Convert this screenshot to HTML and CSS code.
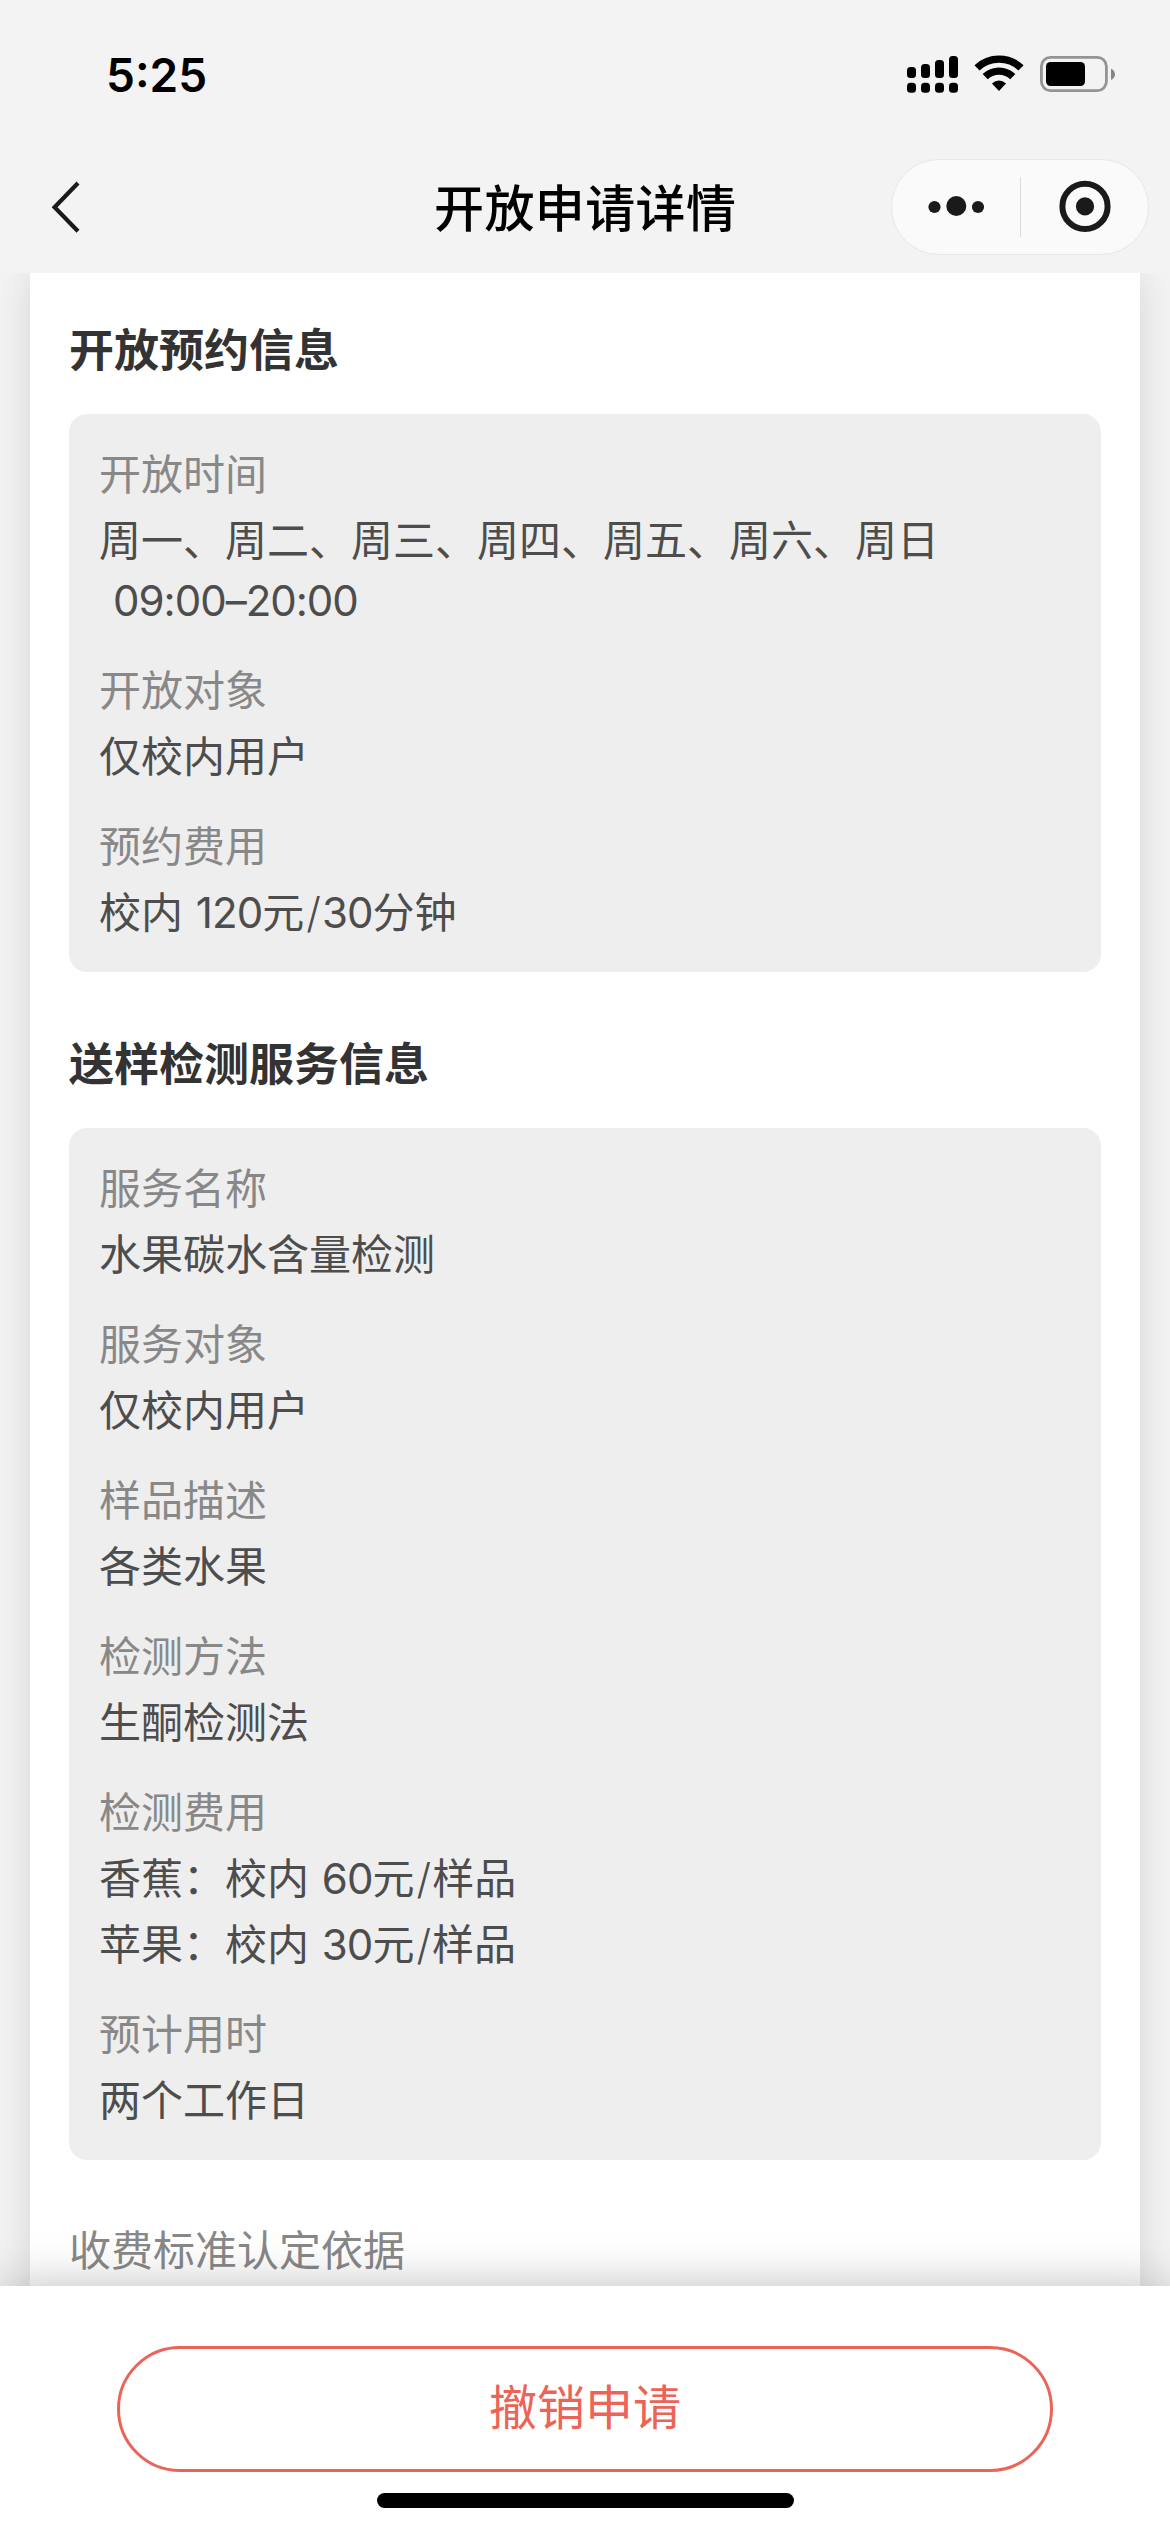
FILE: index.html
```html
<!DOCTYPE html>
<html lang="zh-CN">
<head>
<meta charset="utf-8">
<title>开放申请详情</title>
<link rel="stylesheet" href="styles.css">
</head>
<body>
<div class="page">
  <header class="header">
    <div class="status">
      <span class="clock">5:25</span>
      <div class="status-icons">
        <svg width="51" height="38" viewBox="0 0 51 38">
          <rect x="0" y="12" width="9" height="11" rx="3.5"/><rect x="14" y="9" width="9" height="14" rx="3.5"/>
          <rect x="28" y="5" width="9" height="18" rx="3.5"/><rect x="42" y="1" width="9" height="22" rx="3.5"/>
          <rect x="0" y="27.8" width="9" height="10" rx="3.5"/><rect x="14" y="27.8" width="9" height="10" rx="3.5"/>
          <rect x="28" y="27.8" width="9" height="10" rx="3.5"/><rect x="42" y="27.8" width="9" height="10" rx="3.5"/>
        </svg>
        <svg class="wifi" width="50" height="38" viewBox="0 0 50 38">
          <g fill="none" stroke="#000" stroke-width="7.4"><path d="M3 12.9a32 32 0 0 1 44 0"/><path d="M11.2 21.6a20 20 0 0 1 27.6 0"/></g>
          <path d="M25 36 17.9 28.6Q25 22.4 32.1 28.6Z"/>
        </svg>
        <svg width="76" height="38" viewBox="0 0 76 38">
          <rect x="1.4" y="2.4" width="65" height="33.2" rx="9" fill="none" stroke="#949494" stroke-width="2.8"/>
          <rect x="6" y="7" width="39" height="24" rx="4.5"/>
          <path d="M71 13.7c5.3 2 5.3 9.3 0 11.3Z" fill="#868686"/>
        </svg>
      </div>
    </div>
    <nav class="nav">
      <svg class="back" width="30" height="54" viewBox="0 0 30 54"><path d="M27 3 3.6 27.2 27 51.2" fill="none" stroke="#1a1a1a" stroke-width="4.2"/></svg>
      <h1 class="nav-title">开放申请详情</h1>
      <div class="capsule">
        <svg width="128" height="94" viewBox="0 0 128 94" fill="#1a1a1a"><circle cx="42.5" cy="47" r="6.1"/><circle cx="64.3" cy="46" r="10"/><circle cx="86" cy="47" r="6.1"/></svg>
        <span class="divider"></span>
        <svg width="127" height="94" viewBox="0 0 127 94"><circle cx="64" cy="46.4" r="22.6" fill="none" stroke="#1a1a1a" stroke-width="6"/><circle cx="64" cy="46.4" r="9.1" fill="#1a1a1a"/></svg>
      </div>
    </nav>
  </header>

  <main class="content">
    <div class="card">
      <h2 class="section-title">开放预约信息</h2>
      <section class="panel">
        <div class="field">
          <div class="label">开放时间</div>
          <div>周一、周二、周三、周四、周五、周六、周日</div>
          <div class="time">09:00–20:00</div>
        </div>
        <div class="field"><div class="label">开放对象</div><div>仅校内用户</div></div>
        <div class="field"><div class="label">预约费用</div><div>校内 <span class="num">120</span>元<span class="slash">/</span><span class="num">30</span>分钟</div></div>
      </section>

      <h2 class="section-title">送样检测服务信息</h2>
      <section class="panel">
        <div class="field"><div class="label">服务名称</div><div>水果碳水含量检测</div></div>
        <div class="field"><div class="label">服务对象</div><div>仅校内用户</div></div>
        <div class="field"><div class="label">样品描述</div><div>各类水果</div></div>
        <div class="field"><div class="label">检测方法</div><div>生酮检测法</div></div>
        <div class="field">
          <div class="label">检测费用</div>
          <div>香蕉：校内 <span class="num">60</span>元<span class="slash">/</span>样品</div>
          <div>苹果：校内 <span class="num">30</span>元<span class="slash">/</span>样品</div>
        </div>
        <div class="field"><div class="label">预计用时</div><div>两个工作日</div></div>
      </section>
      <div class="label basis">收费标准认定依据</div>
    </div>
  </main>

  <footer class="footer">
    <button class="cancel" type="button">撤销申请</button>
    <div class="home-bar"></div>
  </footer>
</div>
</body>
</html>
```
FILE: styles.css
```css
* { box-sizing: border-box; }
body {
  margin: 0;
  background: #f3f3f3;
  font-family: Inter, "Noto Sans CJK SC", sans-serif;
  font-size: 42px;
  line-height: 66px;
  color: #4d4d4d;
}
.page {
  width: 1170px;
  height: 2532px;
  display: flex;
  flex-direction: column;
  overflow: hidden;
}
svg { display: block; flex: none; }

/* Status bar and navigation */
.header { height: 273px; flex: none; }
.status {
  height: 150px;
  padding: 0 54px 0 106px;
  display: flex;
  justify-content: space-between;
}
.clock {
  color: #000;
  font-size: 46px;
  font-weight: 600;
  line-height: 150px;
}
.status-icons { display: flex; padding-top: 55px; }
.wifi { margin: 0 16px; }
.nav {
  height: 123px;
  padding: 9px 21px 0 51px;
  display: grid;
  grid-template-columns: 258px 1fr 258px;
  align-items: start;
}
.back { margin-top: 21px; }
.nav-title {
  margin: 0;
  padding: 2px 0 0 125px;
  color: #000;
  font-size: 50px;
  font-weight: 500;
  line-height: 96px;
  letter-spacing: 0.4px;
  white-space: nowrap;
}
.capsule {
  width: 258px;
  height: 96px;
  border: 1px solid #e7e7e7;
  border-radius: 48px;
  background: #fafafa;
  display: flex;
  align-items: center;
}
.divider { width: 1px; height: 60px; background: #dcdcdc; }

/* Scrolled content */
.content { flex: 1; min-height: 0; overflow: hidden; padding: 0 30px; }
.card {
  height: 100%;
  padding: 45px 39px 0;
  background: #fff;
  box-shadow: 0 0 36px rgba(0, 0, 0, .12);
}
.section-title {
  margin: 0 0 30px;
  color: #333;
  font-size: 45px;
  font-weight: 600;
  line-height: 66px;
}
.panel {
  margin-bottom: 60px;
  padding: 28px 30px 26px;
  border-radius: 18px;
  background: #eee;
  display: flex;
  flex-direction: column;
  gap: 24px;
  word-spacing: 1px;
}
.label { color: #888; }
.time {
  height: 60px;
  padding-left: 14px;
  line-height: 53px;
  letter-spacing: -1px;
}
.num { letter-spacing: -0.9px; }
.slash { margin: 0 1px 0 2px; font-weight: 300; }
.basis { margin-top: -2px; }

/* Action bar */
.footer {
  position: relative;
  height: 246px;
  padding: 60px 117px 0;
  background: #fff;
  box-shadow: 0 0 45px rgba(0, 0, 0, .26);
  display: flex;
  flex-direction: column;
  align-items: center;
  gap: 21px;
}
.cancel {
  width: 936px;
  height: 126px;
  padding: 0 0 2px;
  border: 3px solid #eb6457;
  border-radius: 63px;
  background: #fff;
  color: #eb6457;
  font: inherit;
  font-size: 48px;
}
.home-bar { width: 417px; height: 15px; border-radius: 8px; background: #000; }
```
